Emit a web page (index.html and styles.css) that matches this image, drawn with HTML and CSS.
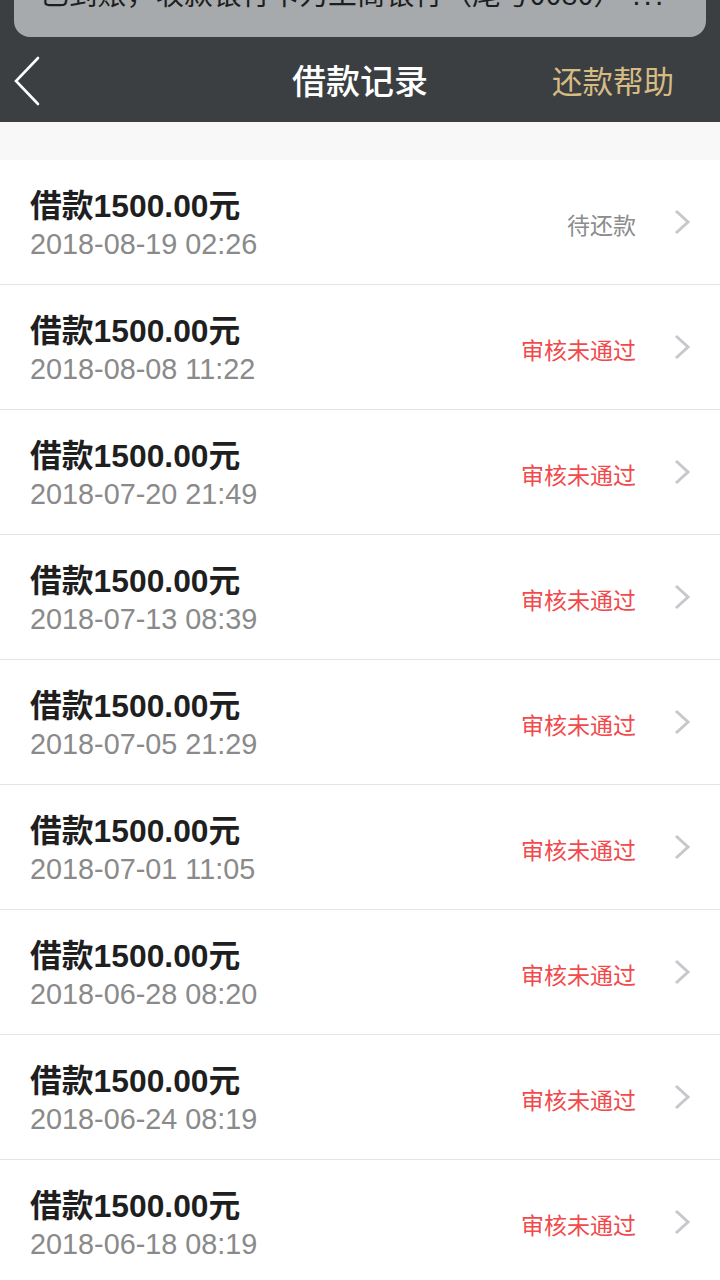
FILE: index.html
```html
<!DOCTYPE html>
<html lang="zh-CN">
<head>
<meta charset="utf-8">
<title>借款记录</title>
<link rel="stylesheet" href="styles.css">
</head>
<body>
<div class="page">
  <div class="notice"><span class="notice-text">已到账，收款银行卡为工商银行（尾号0080）<span class="dots">...</span></span></div>
  <header class="nav">
    <div class="nav-left">
      <svg class="back" width="30" height="50" viewBox="0 0 30 50"><polyline points="24,2 2,25 24,48" fill="none" stroke="#fff" stroke-width="2.6" stroke-linecap="round" stroke-linejoin="miter"/></svg>
    </div>
    <h1 class="nav-title">借款记录</h1>
    <div class="nav-right">还款帮助</div>
  </header>
  <div class="strip"></div>
  <ul class="list">
    <li class="row"><div class="info"><div class="amount">借款1500.00元</div><div class="date">2018-08-19 02:26</div></div><span class="status pending">待还款</span><svg class="chev" width="18" height="26" viewBox="0 0 18 26"><polyline points="3,2 15,13 3,24" fill="none" stroke="#c7c7cc" stroke-width="3"/></svg></li>
    <li class="row"><div class="info"><div class="amount">借款1500.00元</div><div class="date">2018-08-08 11:22</div></div><span class="status rejected">审核未通过</span><svg class="chev" width="18" height="26" viewBox="0 0 18 26"><polyline points="3,2 15,13 3,24" fill="none" stroke="#c7c7cc" stroke-width="3"/></svg></li>
    <li class="row"><div class="info"><div class="amount">借款1500.00元</div><div class="date">2018-07-20 21:49</div></div><span class="status rejected">审核未通过</span><svg class="chev" width="18" height="26" viewBox="0 0 18 26"><polyline points="3,2 15,13 3,24" fill="none" stroke="#c7c7cc" stroke-width="3"/></svg></li>
    <li class="row"><div class="info"><div class="amount">借款1500.00元</div><div class="date">2018-07-13 08:39</div></div><span class="status rejected">审核未通过</span><svg class="chev" width="18" height="26" viewBox="0 0 18 26"><polyline points="3,2 15,13 3,24" fill="none" stroke="#c7c7cc" stroke-width="3"/></svg></li>
    <li class="row"><div class="info"><div class="amount">借款1500.00元</div><div class="date">2018-07-05 21:29</div></div><span class="status rejected">审核未通过</span><svg class="chev" width="18" height="26" viewBox="0 0 18 26"><polyline points="3,2 15,13 3,24" fill="none" stroke="#c7c7cc" stroke-width="3"/></svg></li>
    <li class="row"><div class="info"><div class="amount">借款1500.00元</div><div class="date">2018-07-01 11:05</div></div><span class="status rejected">审核未通过</span><svg class="chev" width="18" height="26" viewBox="0 0 18 26"><polyline points="3,2 15,13 3,24" fill="none" stroke="#c7c7cc" stroke-width="3"/></svg></li>
    <li class="row"><div class="info"><div class="amount">借款1500.00元</div><div class="date">2018-06-28 08:20</div></div><span class="status rejected">审核未通过</span><svg class="chev" width="18" height="26" viewBox="0 0 18 26"><polyline points="3,2 15,13 3,24" fill="none" stroke="#c7c7cc" stroke-width="3"/></svg></li>
    <li class="row"><div class="info"><div class="amount">借款1500.00元</div><div class="date">2018-06-24 08:19</div></div><span class="status rejected">审核未通过</span><svg class="chev" width="18" height="26" viewBox="0 0 18 26"><polyline points="3,2 15,13 3,24" fill="none" stroke="#c7c7cc" stroke-width="3"/></svg></li>
    <li class="row"><div class="info"><div class="amount">借款1500.00元</div><div class="date">2018-06-18 08:19</div></div><span class="status rejected">审核未通过</span><svg class="chev" width="18" height="26" viewBox="0 0 18 26"><polyline points="3,2 15,13 3,24" fill="none" stroke="#c7c7cc" stroke-width="3"/></svg></li>
  </ul>
</div>
</body>
</html>
```
FILE: styles.css
```css
* { box-sizing: border-box; }
html, body { margin: 0; padding: 0; background: #fff; }
body {
  font-family: "Liberation Sans", "Noto Sans CJK SC", sans-serif;
  color: #222;
}
.page { position: relative; width: 720px; height: 1280px; overflow: hidden; }

.notice {
  position: absolute;
  left: 14px;
  right: 14px;
  top: -30px;
  height: 67px;
  background: #a6aaad;
  border-radius: 0 0 16px 16px;
  padding: 0 0 0 26px;
  display: flex;
  align-items: flex-start;
  z-index: 2;
}
.notice-text {
  font-size: 28.8px;
  line-height: 36px;
  margin-top: 5px;
  color: #1e1e1e;
  white-space: nowrap;
  font-family: "Noto Sans CJK SC", sans-serif;
}
.dots {
  font-family: "Liberation Sans", sans-serif;
  font-size: 30px;
  letter-spacing: 3px;
  margin-left: 10px;
}

.nav {
  background: #3b3f42;
  height: 122px;
  padding-top: 40px;
  display: grid;
  grid-template-columns: 1fr auto 1fr;
  align-items: center;
}
.nav-left { padding-left: 14px; display: flex; align-items: center; }
.back { display: block; }
.nav-title {
  margin: 0;
  font-size: 34px;
  font-weight: 500;
  color: #fff;
  font-family: "Noto Sans CJK SC", sans-serif;
  line-height: 40px;
  margin-top: -3px;
}
.nav-right {
  justify-self: end;
  padding-right: 46px;
  font-size: 30.5px;
  color: #d6bc82;
  font-family: "Noto Sans CJK SC", sans-serif;
  line-height: 40px;
  margin-top: -3px;
}

.strip { height: 38px; background: #f8f8f8; }

.list { list-style: none; margin: 0; padding: 0; }
.row {
  height: 125px;
  border-bottom: 1px solid #e4e4e4;
  display: flex;
  align-items: center;
  padding: 0 29px 0 30px;
}
.info { flex: 1; display: flex; flex-direction: column; padding-top: 5px; }
.amount {
  font-size: 31.8px;
  font-weight: bold;
  line-height: 38px;
  color: #1f1f1f;
}
.date {
  font-size: 28.8px;
  line-height: 38px;
  color: #8a8a8a;
}
.status {
  font-size: 23px;
  margin-right: 37px;
  font-family: "Noto Sans CJK SC", sans-serif;
  line-height: 30px;
  margin-top: 4px;
}
.status.pending { color: #8c8c8c; }
.status.rejected { color: #f2494c; }
.chev { display: block; }
```
